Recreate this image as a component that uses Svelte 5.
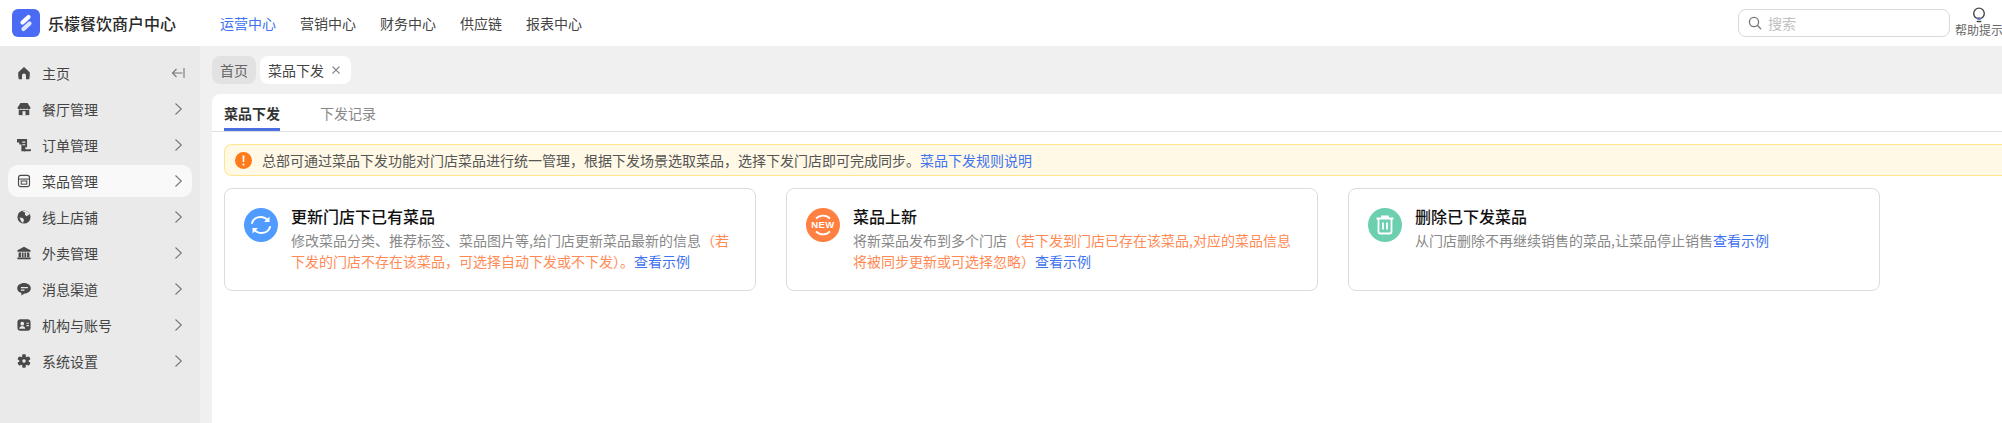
<script lang="ts">
	const topNav = ['运营中心', '营销中心', '财务中心', '供应链', '报表中心'];
	const menu = [
		{ key: 'home', label: '主页' },
		{ key: 'shop', label: '餐厅管理' },
		{ key: 'order', label: '订单管理' },
		{ key: 'dish', label: '菜品管理', active: true },
		{ key: 'globe', label: '线上店铺' },
		{ key: 'bank', label: '外卖管理' },
		{ key: 'chat', label: '消息渠道' },
		{ key: 'contact', label: '机构与账号' },
		{ key: 'gear', label: '系统设置' }
	];
	const gearTeeth = [0, 60, 120, 180, 240, 300];
</script>

<div class="page">
	<header class="topbar">
		<div class="brand">
			<svg class="logo" viewBox="0 0 28 28" aria-hidden="true">
				<rect width="28" height="28" rx="6" fill="#4a6cf5" />
				<path d="M10.500 13.500 16.500 8" stroke="#fff" stroke-width="4.200" stroke-linecap="round" />
				<path d="M11.500 20 17.500 14.500" stroke="#dfe6ff" stroke-width="4.200" stroke-linecap="round" />
			</svg>
			<span class="brand-name">乐檬餐饮商户中心</span>
		</div>
		<nav class="topnav">
			{#each topNav as item, i}
				<span class:on={i === 0}>{item}</span>
			{/each}
		</nav>
		<div class="search">
			<svg width="14" height="14" viewBox="0 0 14 14" aria-hidden="true">
				<circle cx="6" cy="6" r="4.600" fill="none" stroke="#777" stroke-width="1.300" />
				<path d="m9.500 9.500 3.200 3.200" stroke="#777" stroke-width="1.300" stroke-linecap="round" />
			</svg>
			<span>搜索</span>
		</div>
		<div class="help">
			<svg width="14" height="16" viewBox="0 0 14 16" aria-hidden="true">
				<path d="M4.600 11.200C3 10.200 1.700 8.600 1.700 6.500a5.300 5.300 0 0 1 10.600 0c0 2.100-1.300 3.700-2.900 4.700Z" fill="none" stroke="#444" stroke-width="1.300" />
				<path d="M5.200 11.300h3.600v1.500H5.200Z" fill="#4a6cf5" />
				<path d="M5.200 14.500h3.600" stroke="#444" stroke-width="1.300" stroke-linecap="round" />
			</svg>
			<span>帮助提示</span>
		</div>
	</header>

	<div class="body">
		<aside class="sidebar">
			{#each menu as item, i}
				<div class="menu-item" class:active={item.active}>
					<svg class="menu-icon" viewBox="0 0 16 16" aria-hidden="true">
						{#if item.key === 'home'}
							<path d="M8 1 14.500 7.200c.3 3 0 5.500-.5 7.800H10.300V11a2.300 2.300 0 0 0-4.600 0v4H2C1.500 12.700 1.200 10.200 1.500 7.200Z" fill="#4a4a4a" />
						{:else if item.key === 'shop'}
							<path d="M4 1h8l3.500 5.500a2 2 0 0 1-3.800.800 2.300 2.300 0 0 1-3.700 0 2.300 2.300 0 0 1-3.700 0A2 2 0 0 1 .5 6.500Z" fill="#4a4a4a" />
							<path d="M2 9h12v6H2Z" fill="#4a4a4a" />
							<path d="M6.300 10.500h3.400V15H6.300Z" fill="#eaeaea" />
						{:else if item.key === 'order'}
							<path d="M0 1h11.500v9.500H9.500V15H5V7.500H2.500V5H0Z" fill="#4a4a4a" />
							<path d="M6 4h3.500v1.300H6ZM6 7h3.500v1.300H6Z" fill="#eaeaea" />
							<path d="M8 12.800h8V14a1 1 0 0 1-1 1H8Z" fill="#4a4a4a" />
						{:else if item.key === 'dish'}
							<rect x="1.700" y="1.500" width="12.600" height="13" rx="2.500" fill="none" stroke="#4a4a4a" stroke-width="1.300" />
							<path d="M1.700 5.800h12.600" stroke="#4a4a4a" stroke-width="1.200" />
							<rect x="4.800" y="8" width="6.400" height="3.600" fill="none" stroke="#4a4a4a" stroke-width="1.200" />
						{:else if item.key === 'globe'}
							<circle cx="8" cy="8" r="7.500" fill="#4a4a4a" />
							<path d="M6 1.200 9.500 3 9 5.500 11 7l3.800-2.300C13.500 2 10 .3 6 1.200ZM2.800 8.500 6.500 9 8 11 7 14.500l-1.500-.5L4 11.500Z" fill="#eaeaea" />
						{:else if item.key === 'bank'}
							<path d="M8 .8 15.500 4.800v1.700H.5V4.800Z" fill="#4a4a4a" />
							<path d="M1.800 7.500h2.700v5H1.800ZM5.500 7.500h2v5h-2ZM8.500 7.500h2v5h-2ZM11.500 7.500h2.700v5h-2.700Z" fill="#4a4a4a" />
							<path d="M.5 13h15v2.200H.5Z" fill="#4a4a4a" />
						{:else if item.key === 'chat'}
							<path d="M8 1c4.400 0 7.800 2.600 7.800 6s-3.300 6-7 6L5 15.500V12.600C2 11.700.2 9.600.2 7 .2 3.600 3.600 1 8 1Z" fill="#4a4a4a" />
							<path d="M4.500 5.600h8v1.500h-8ZM4.500 8.500h4v1.400h-4Z" fill="#eaeaea" />
						{:else if item.key === 'contact'}
							<rect x=".5" y="1.500" width="15" height="13" rx="3.500" fill="#4a4a4a" />
							<circle cx="6" cy="6.500" r="2.100" fill="#eaeaea" />
							<path d="M2.500 12.300c.3-2.300 1.800-3.200 3.500-3.200s3.200.9 3.500 3.200Z" fill="#eaeaea" />
							<path d="M10.800 5.300h2.800v1.300h-2.800ZM10.800 8h2.800v1.300h-2.800Z" fill="#eaeaea" />
						{:else}
							{#each gearTeeth as deg}
								<rect x="6" y=".4" width="4" height="4" rx="1" fill="#4a4a4a" transform="rotate({deg} 8 8)" />
							{/each}
							<circle cx="8" cy="8" r="5.400" fill="#4a4a4a" />
							<circle cx="8" cy="8" r="2" fill="#eaeaea" />
						{/if}
					</svg>
					<span class="menu-label">{item.label}</span>
					{#if i === 0}
						<svg class="menu-end" width="14" height="14" viewBox="0 0 14 14" aria-hidden="true">
							<path d="M13 2v10M11.500 7H1.500M5.500 3 1.500 7l4 4" fill="none" stroke="#777" stroke-width="1.100" />
						</svg>
					{:else}
						<svg class="menu-end" width="14" height="14" viewBox="0 0 14 14" aria-hidden="true">
							<path d="m4.500 1.500 5.800 5.500-5.800 5.500" fill="none" stroke="#777" stroke-width="1.100" />
						</svg>
					{/if}
				</div>
			{/each}
		</aside>

		<main class="main">
			<div class="page-tabs">
				<span class="page-tab home">首页</span>
				<span class="page-tab current">菜品下发
					<svg class="close" width="10" height="10" viewBox="0 0 10 10" aria-hidden="true">
						<path d="m1.500 1.500 7 7m0-7-7 7" stroke="#888" stroke-width="1.100" />
					</svg>
				</span>
			</div>
			<section class="panel">
				<div class="tabs">
					<span class="tab selected">菜品下发</span>
					<span class="tab">下发记录</span>
				</div>
				<div class="panel-body">
					<div class="notice">
						<svg width="17" height="17" viewBox="0 0 17 17" aria-hidden="true">
							<circle cx="8.500" cy="8.500" r="8.500" fill="#ff7a1a" />
							<path d="M7.500 3.500h2L9.200 10H7.800Z" fill="#fff" />
							<circle cx="8.500" cy="12.500" r="1.100" fill="#fff" />
						</svg>
						<span>总部可通过菜品下发功能对门店菜品进行统一管理，根据下发场景选取菜品，选择下发门店即可完成同步。<a href="#rules">菜品下发规则说明</a></span>
					</div>
					<div class="cards">
						<article class="card">
							<svg class="card-icon" viewBox="0 0 34 34" aria-hidden="true">
								<circle cx="17" cy="17" r="17" fill="#4f9bff" />
								<path d="M8 15c1-3.700 4.600-6 8.500-6 3 0 5.700 1.300 7.300 3.500" fill="none" stroke="#fff" stroke-width="2" stroke-linecap="round" />
								<path d="M26 19c-1 3.700-4.600 6-8.500 6-3 0-5.700-1.300-7.300-3.500" fill="none" stroke="#fff" stroke-width="2" stroke-linecap="round" />
								<path d="M25.500 8.500v5.500H20ZM8.500 25.500V20H14Z" fill="#fff" />
							</svg>
							<div class="card-text">
								<h3>更新门店下已有菜品</h3>
								<p>修改菜品分类、推荐标签、菜品图片等,给门店更新菜品最新的信息<em>（若下发的门店不存在该菜品，可选择自动下发或不下发）。</em><a href="#demo">查看示例</a></p>
							</div>
						</article>
						<article class="card">
							<svg class="card-icon" viewBox="0 0 34 34" aria-hidden="true">
								<circle cx="17" cy="17" r="17" fill="#ff8040" />
								<path d="M10 10.500a10 10 0 0 1 14 0M10 23.500a10 10 0 0 0 14 0" fill="none" stroke="#fff" stroke-width="1.800" />
								<text x="17" y="20.300" text-anchor="middle" class="new-text">NEW</text>
							</svg>
							<div class="card-text">
								<h3>菜品上新</h3>
								<p>将新菜品发布到多个门店<em>（若下发到门店已存在该菜品,对应的菜品信息将被同步更新或可选择忽略）</em><a href="#demo">查看示例</a></p>
							</div>
						</article>
						<article class="card">
							<svg class="card-icon" viewBox="0 0 34 34" aria-hidden="true">
								<circle cx="17" cy="17" r="17" fill="#6ccfb0" />
								<path d="M8.500 10.500h17M14 10.500V8.500h6v2" fill="none" stroke="#fff" stroke-width="1.800" />
								<path d="M10.500 10.500v13a2 2 0 0 0 2 2h9a2 2 0 0 0 2-2v-13" fill="none" stroke="#fff" stroke-width="1.800" />
								<path d="M15 14.500v7M19 14.500v7" stroke="#fff" stroke-width="1.800" />
							</svg>
							<div class="card-text">
								<h3>删除已下发菜品</h3>
								<p>从门店删除不再继续销售的菜品,让菜品停止销售<a href="#demo">查看示例</a></p>
							</div>
						</article>
					</div>
				</div>
			</section>
		</main>
	</div>
</div>

<style>
	:global(body) {
		margin: 0;
		overflow: hidden;
	}

	.page {
		width: 2002px;
		height: 423px;
		display: flex;
		flex-direction: column;
		overflow: hidden;
		background: #f0f0f0;
		color: #444;
		font-family: 'Noto Sans CJK SC', 'Noto Sans', sans-serif;
		font-size: 14px;
	}

	.topbar {
		flex: none;
		height: 46px;
		display: flex;
		align-items: center;
		background: #fff;
		padding-left: 12px;
	}

	.brand {
		display: flex;
		align-items: center;
		gap: 8px;
		width: 208px;
	}

	.logo {
		width: 28px;
		height: 28px;
	}

	.brand-name {
		font-size: 16px;
		font-weight: 500;
		color: #2a2a2a;
		white-space: nowrap;
	}

	.topnav {
		display: flex;
		gap: 24px;
		color: #444;
	}

	.topnav .on {
		color: #3f74ee;
	}

	.search {
		margin-left: auto;
		box-sizing: border-box;
		width: 212px;
		height: 28px;
		display: flex;
		align-items: center;
		gap: 6px;
		padding-left: 9px;
		border: 1px solid #d9d9d9;
		border-radius: 8px;
		color: #c0c0c0;
		font-size: 14px;
	}

	.help {
		flex: none;
		width: 52px;
		margin-top: -3px;
		display: flex;
		flex-direction: column;
		align-items: center;
		padding-left: 6px;
		box-sizing: border-box;
		color: #666;
		font-size: 12px;
		line-height: 14px;
		white-space: nowrap;
	}

	.body {
		flex: 1;
		display: flex;
		min-height: 0;
	}

	.sidebar {
		flex: none;
		box-sizing: border-box;
		width: 200px;
		padding: 11px 8px 0;
		display: flex;
		flex-direction: column;
		gap: 4px;
		background: #eaeaea;
	}

	.menu-item {
		height: 32px;
		display: flex;
		align-items: center;
		padding: 0 7px 0 9px;
		border-radius: 10px;
		color: #444;
	}

	.menu-item.active {
		background: #f9f9f9;
	}

	.menu-icon {
		width: 14px;
		height: 14px;
		flex: none;
	}

	.menu-label {
		margin-left: 11px;
		flex: 1;
	}

	.main {
		flex: 1;
		min-width: 0;
		display: flex;
		flex-direction: column;
		padding: 10px 0 0 12px;
	}

	.page-tabs {
		display: flex;
		gap: 4px;
		height: 28px;
		margin-bottom: 10px;
	}

	.page-tab {
		display: flex;
		align-items: center;
		padding: 0 8px;
		border-radius: 8px;
		white-space: nowrap;
	}

	.page-tab.home {
		background: #e2e2e2;
		color: #666;
	}

	.page-tab.current {
		background: #fff;
		color: #444;
		padding-right: 10px;
	}

	.close {
		margin-left: 7px;
		flex: none;
	}

	.panel {
		flex: 1;
		background: #fff;
		border-radius: 8px 0 0 0;
	}

	.tabs {
		height: 37px;
		display: flex;
		gap: 40px;
		padding-left: 12px;
		border-bottom: 1px solid #e0e0e0;
	}

	.tab {
		height: 37px;
		box-sizing: border-box;
		padding-top: 9px;
		line-height: 20px;
		color: #888;
	}

	.tab.selected {
		color: #333;
		font-weight: 700;
		border-bottom: 3px solid #4a6ee0;
		border-radius: 2px 2px 0 0;
	}

	.panel-body {
		padding: 12px 0 0 12px;
	}

	.notice {
		box-sizing: border-box;
		height: 32px;
		display: flex;
		align-items: center;
		gap: 10px;
		padding-left: 10px;
		background: #fff9e6;
		border: 1px solid #ffe58f;
		border-right: 0;
		border-radius: 8px 0 0 8px;
		color: #555;
		font-size: 14px;
	}

	a {
		color: #3f74ee;
		text-decoration: none;
	}

	.cards {
		display: flex;
		gap: 30px;
		margin-top: 12px;
	}

	.card {
		flex: none;
		box-sizing: border-box;
		width: 532px;
		height: 103px;
		display: flex;
		align-items: flex-start;
		gap: 13px;
		padding: 17px 24px 0 19px;
		border: 1px solid #dcdcdc;
		border-radius: 8px;
	}

	.card-icon {
		flex: none;
		width: 34px;
		height: 34px;
		margin-top: 2px;
	}

	.new-text {
		fill: #fff;
		font-family: 'Liberation Sans', sans-serif;
		font-size: 9.500px;
		font-weight: 700;
		letter-spacing: 0.4px;
	}

	.card-text {
		min-width: 0;
	}

	h3 {
		margin: 0;
		font-size: 16px;
		font-weight: 500;
		line-height: 20px;
		color: #111;
	}

	p {
		margin: 4px 0 0;
		font-size: 14px;
		line-height: 21px;
		color: #888;
	}

	em {
		font-style: normal;
		color: #ff8a55;
	}
</style>
